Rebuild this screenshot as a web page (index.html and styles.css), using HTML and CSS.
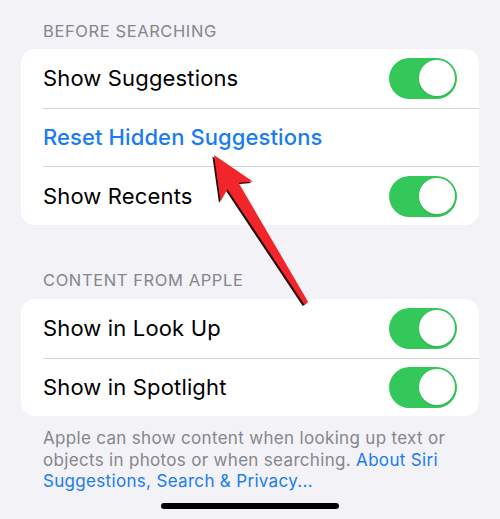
FILE: index.html
```html
<!DOCTYPE html>
<html lang="en">
<head>
<meta charset="utf-8">
<title>Siri &amp; Search</title>
<link rel="stylesheet" href="styles.css">
</head>
<body>
<div class="screen">
  <div class="section-header first">Before Searching</div>
  <div class="card">
    <div class="row">
      <span class="label">Show Suggestions</span>
      <span class="toggle"><span class="knob"></span></span>
    </div>
    <div class="row">
      <span class="label link">Reset Hidden Suggestions</span>
    </div>
    <div class="row">
      <span class="label">Show Recents</span>
      <span class="toggle"><span class="knob"></span></span>
    </div>
  </div>

  <div class="section-header second">Content From Apple</div>
  <div class="card">
    <div class="row">
      <span class="label">Show in Look Up</span>
      <span class="toggle"><span class="knob"></span></span>
    </div>
    <div class="row">
      <span class="label">Show in Spotlight</span>
      <span class="toggle"><span class="knob"></span></span>
    </div>
  </div>

  <p class="footer">Apple can show content when looking up text or<br>objects in photos or when searching. <span class="footer-link">About Siri<br>Suggestions, Search &amp; Privacy...</span></p>

  <div class="home-indicator"></div>

  <svg class="arrow" viewBox="0 0 500 519" width="500" height="519" aria-hidden="true">
    <polygon class="arrow-shadow" points="214,155 252.8,181.5 238.6,182.8 308.2,302 304.3,304.5 227.4,189.2 220.6,201.5" transform="translate(-1.6,1.4)"/>
    <polygon class="arrow-body" points="214,155 252.8,181.5 238.6,182.8 308.2,302 304.3,304.5 227.4,189.2 220.6,201.5"/>
  </svg>
</div>
</body>
</html>
```
FILE: styles.css
```css
html, body {
  margin: 0;
  padding: 0;
  background: #f2f2f7;
}

.screen {
  position: relative;
  width: 500px;
  height: 519px;
  overflow: hidden;
  padding: 0 21px;
  box-sizing: border-box;
  font-family: Inter, "Noto Sans", "Liberation Sans", sans-serif;
  -webkit-font-smoothing: antialiased;
}

.section-header {
  padding-left: 22px;
  font-size: 16.5px;
  line-height: 20px;
  text-transform: uppercase;
  color: #86868b;
  letter-spacing: 0.6px;
}

.section-header.first {
  padding-top: 21px;
  margin-bottom: 8px;
}

.section-header.second {
  margin-top: 45px;
  margin-bottom: 9px;
}

.card {
  background: #ffffff;
  border-radius: 14px;
  overflow: hidden;
}

.row {
  height: 58.67px;
  margin-left: 22px;
  padding-right: 22px;
  display: flex;
  align-items: center;
  justify-content: space-between;
  box-sizing: border-box;
}

.row + .row {
  border-top: 1px solid #d4d4d8;
}

.label {
  font-size: 22px;
  color: #000000;
  letter-spacing: 0.15px;
}

.label.link {
  color: #1a7cf2;
  font-weight: 500;
  letter-spacing: 0.1px;
}

.toggle {
  width: 68px;
  height: 41px;
  border-radius: 20.5px;
  background: #34c759;
  position: relative;
  flex: none;
}

.knob {
  position: absolute;
  right: 2.5px;
  top: 2.5px;
  width: 36px;
  height: 36px;
  border-radius: 50%;
  background: #ffffff;
  box-shadow: 0 1px 2px rgba(0, 0, 0, 0.12);
}

.footer {
  margin: 12px 0 0;
  padding-left: 22px;
  font-size: 17px;
  line-height: 21.5px;
  color: #86868b;
  letter-spacing: 0.32px;
}

.footer-link {
  color: #1a7cf2;
}

.home-indicator {
  width: 178px;
  height: 6.5px;
  border-radius: 4px;
  background: #000000;
  margin: 10px auto 0;
}

.arrow {
  position: absolute;
  left: 0;
  top: 0;
}

.arrow-shadow {
  fill: #2a0c0c;
}

.arrow-body {
  fill: #f2262a;
}
```
